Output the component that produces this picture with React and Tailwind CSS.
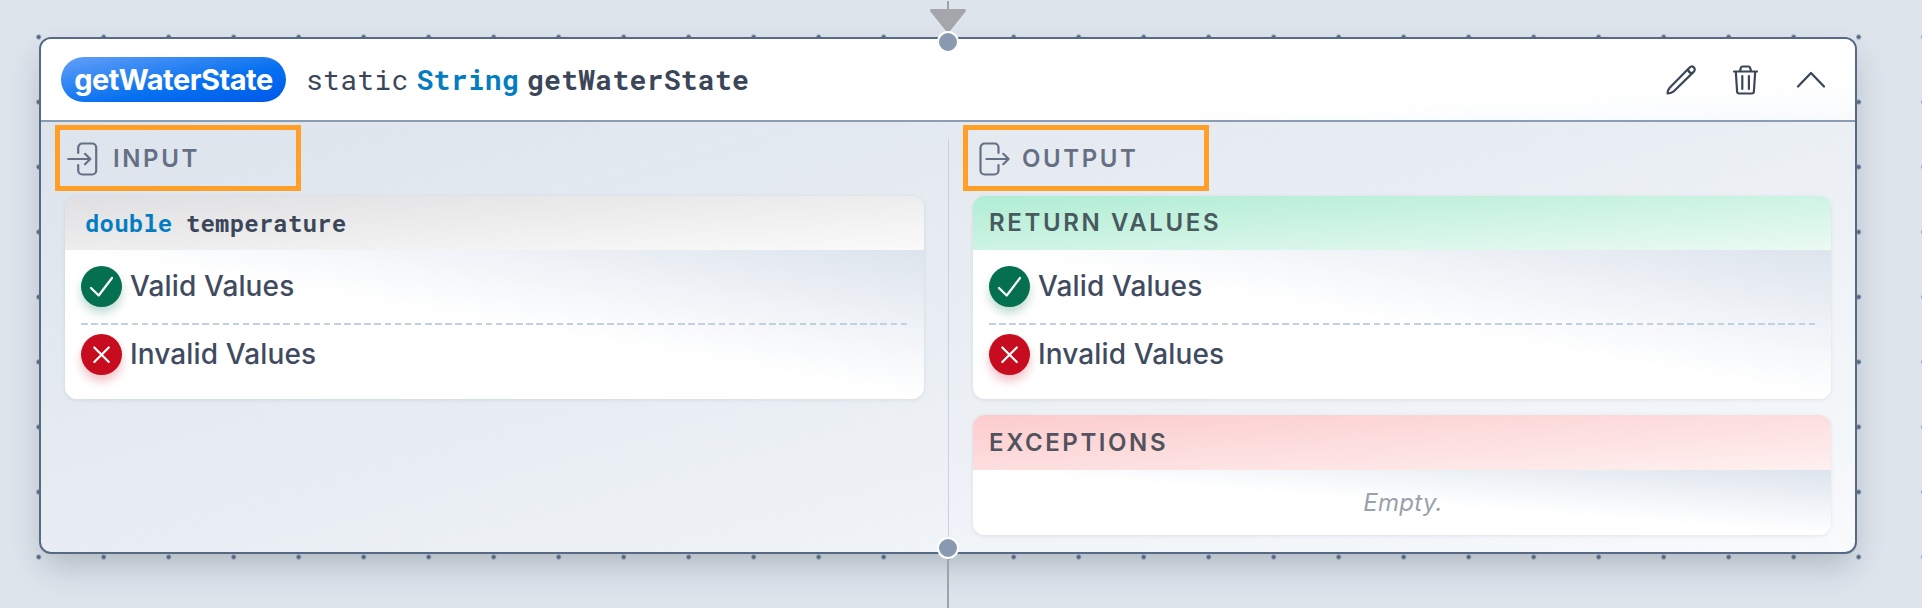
import React from "react";

const LoginIcon = () => (
  <svg className="h-[34px] w-[31px] shrink-0" viewBox="0 0 31 34" fill="none" stroke="#667085" strokeWidth="2.200" strokeLinecap="round" strokeLinejoin="round">
    <path d="M11.200 11V5.500a4 4 0 0 1 4-4h10a4 4 0 0 1 4 4v23a4 4 0 0 1-4 4h-10a4 4 0 0 1-4-4V23" />
    <path d="M1.200 17h22M18 11.800l5.300 5.200-5.300 5.200" />
  </svg>
);

const LogoutIcon = () => (
  <svg className="h-[34px] w-[31px] shrink-0" viewBox="0 0 31 34" fill="none" stroke="#667085" strokeWidth="2.200" strokeLinecap="round" strokeLinejoin="round">
    <path d="M19.500 11V5.500a4 4 0 0 0-4-4h-10a4 4 0 0 0-4 4v23a4 4 0 0 0 4 4h10a4 4 0 0 0 4-4V23" />
    <path d="M7.500 17h22M24.300 11.800l5.300 5.200-5.300 5.200" />
  </svg>
);

const PencilIcon = () => (
  <svg className="h-[30px] w-[30px]" viewBox="0 0 30 30" fill="none" stroke="#3b4659" strokeWidth="2.200" strokeLinecap="round" strokeLinejoin="round">
    <path d="M1.500 28.500Q1.600 25.200 3.700 22.800L23.600 2.500a2.900 2.900 0 0 1 4.300 4.100L7.300 26.700Q4.800 28.500 1.500 28.500zM22 4.300q.6 3.600 4 4" />
  </svg>
);

const TrashIcon = () => (
  <svg className="h-[30px] w-[25px]" viewBox="0 0 25 30" fill="none" stroke="#3b4659" strokeWidth="2.200" strokeLinecap="round" strokeLinejoin="round">
    <path d="M1 6.500h23M7 6l.8-3q.4-1.500 1.800-1.500h5.800q1.400 0 1.800 1.500L18 6M2.800 6.500l1.300 20q.1 2 2 2h12.800q1.900 0 2-2l1.300-20M9.300 11v13M15.900 11v13" />
  </svg>
);

const ChevronIcon = () => (
  <svg className="h-[18px] w-[30px]" viewBox="0 0 30 18" fill="none" stroke="#3b4659" strokeWidth="2.300" strokeLinecap="round" strokeLinejoin="round">
    <path d="M2 15.500L15 2l13 13.500" />
  </svg>
);

function StatusRow({ valid, label }) {
  return (
    <div className="flex h-[41px] items-center gap-2">
      <span className={valid ? "flex size-[41px] items-center justify-center rounded-full bg-[#05704f] shadow-[0_6px_10px_rgba(5,112,79,0.25)]" : "flex size-[41px] items-center justify-center rounded-full bg-[#c60c1e] shadow-[0_6px_10px_rgba(198,12,30,0.25)]"}>
        <svg className="size-[41px]" viewBox="0 0 41 41" fill="none" stroke="white" strokeWidth="2.200" strokeLinecap="round" strokeLinejoin="round">
          <path d={valid ? "M10 22l7.700 7.500L31 12" : "M13.300 13.500l14.500 14.500M27.800 13.500L13.300 28"} />
        </svg>
      </span>
      <span className="text-[28px] leading-[41px] font-medium tracking-[0.130px] text-[#404b5f]">{label}</span>
    </div>
  );
}

function Values() {
  return (
    <div className="flex h-[149px] flex-col bg-[linear-gradient(to_top_right,#ffffff_50%,#dde4ed_100%)] px-4 pt-4">
      <StatusRow valid label="Valid Values" />
      <div className="mt-4 mb-[9px] h-[2px] bg-[repeating-linear-gradient(to_right,#c3d0e0_0_6.500px,transparent_6.500px_10.120px)]" />
      <StatusRow label="Invalid Values" />
    </div>
  );
}

const panel = "overflow-hidden rounded-xl shadow-[0_1px_4px_rgba(16,24,40,0.09)]";

function SectionLabel({ icon, className, children }) {
  return (
    <div className={`-ml-[10px] flex h-[66px] w-[246px] items-center border-[5px] border-[#ff9f27] ${className}`}>
      {icon}
      <span className="text-[24px] leading-[30px] font-semibold tracking-[2.600px] text-[#667085]">{children}</span>
    </div>
  );
}

function Handle({ className }) {
  return <div className={`absolute left-[937px] size-[22px] rounded-full border-2 border-white bg-[#8899b0] ${className}`} />;
}

export default function App() {
  return (
    <div className="relative h-[608px] w-[1922px] overflow-hidden bg-[#dde4ec] pt-[37px] pl-[39px] font-['Inter',sans-serif]">
      <div className="absolute top-[37px] left-[39px] h-[516px] w-[1818px] rounded-xl shadow-[0_16px_32px_-4px_rgba(30,41,59,0.24)]" />
      <svg className="absolute inset-0 size-full">
        <defs>
          <pattern id="dots" x="6.170" y="4.500" width="65" height="65" patternUnits="userSpaceOnUse">
            <circle cx="32.500" cy="32.500" r="2.200" fill="#526581" />
          </pattern>
        </defs>
        <rect width="1922" height="608" fill="url(#dots)" />
        <path d="M948 1v12M948 553v55" stroke="#a0a2a9" strokeWidth="2" />
        <path d="M931.500 10.500h33L948 31z" fill="#a4a6ac" stroke="#a4a6ac" strokeWidth="3" strokeLinejoin="round" />
      </svg>
      <main className="relative flex h-[517px] w-[1818px] flex-col overflow-hidden rounded-xl border-2 border-[#566a86] bg-[linear-gradient(to_bottom_right,#dde4ec_8%,#e8edf3_50%,#f8fafc_100%)]">
        <header className="flex h-[83px] shrink-0 items-center border-b-2 border-[#8c9cb3] bg-[linear-gradient(to_bottom_right,#ffffff_75%,#f8fafc_100%)] pr-[29px] pl-5">
          <div className="flex h-[45px] w-[225px] items-center justify-center rounded-full bg-[linear-gradient(to_bottom_right,#64a0f7_0%,#0670f0_60%,#0058e8_100%)] text-[29px] font-bold tracking-[-0.5px] text-white">getWaterState</div>
          <div className="ml-[20px] flex gap-[8px] font-['Roboto_Mono','Liberation_Mono',monospace] text-[28px] tracking-[0.280px] text-[#3b4659]">
            <span>static</span>
            <span className="font-bold text-[#047cc1]">String</span>
            <span className="font-bold">getWaterState</span>
          </div>
          <div className="ml-auto flex items-center">
            <PencilIcon />
            <span className="ml-[37px] flex"><TrashIcon /></span>
            <span className="ml-[38px] flex"><ChevronIcon /></span>
          </div>
        </header>
        <div className="grid flex-1 grid-cols-[907px_1fr]">
          <section className="pt-[3px] pr-6 pl-6">
            <SectionLabel icon={<LoginIcon />} className="gap-[15px] pt-px pl-[7px]">INPUT</SectionLabel>
            <div className={`mt-[5px] h-[203px] ${panel}`}>
              <div className="flex h-[54px] items-center gap-[13.500px] bg-[linear-gradient(to_bottom_right,#e0e0e2,#fafafa)] pl-5 font-['Roboto_Mono','Liberation_Mono',monospace] text-[24px] font-bold tracking-[0.170px] text-[#3b4659]">
                <span className="text-[#047cc1]">double</span>
                <span>temperature</span>
              </div>
              <Values />
            </div>
          </section>
          <section className="relative pt-[3px] pr-6 pl-[25px]">
            <div className="absolute top-[17px] bottom-0 left-0 w-px bg-[#c5d1e0]" />
            <SectionLabel icon={<LogoutIcon />} className="gap-[12px] pt-px pl-[11px]">OUTPUT</SectionLabel>
            <div className={`mt-[5px] h-[203px] ${panel}`}>
              <h3 className="flex h-[54px] items-center bg-[linear-gradient(to_bottom_right,#b0edd4,#ebfaf3)] pl-4 text-[24px] font-semibold tracking-[2.620px] text-[#475a5e]">RETURN VALUES</h3>
              <Values />
            </div>
            <div className={`mt-[16px] h-[120px] ${panel}`}>
              <h3 className="flex h-[55px] items-center bg-[linear-gradient(to_bottom_right,#fccccd,#fef0f0)] pl-4 text-[24px] font-semibold tracking-[2.600px] text-[#51535e]">EXCEPTIONS</h3>
              <p className="flex h-[65px] items-center justify-center bg-[linear-gradient(to_top_right,#ffffff_50%,#dde4ed_100%)] pl-[2px] text-[24px] tracking-[0.300px] text-[#9aa1ad] italic">Empty.</p>
            </div>
          </section>
        </div>
      </main>
      <Handle className="top-[31px]" />
      <Handle className="top-[537px]" />
    </div>
  );
}
